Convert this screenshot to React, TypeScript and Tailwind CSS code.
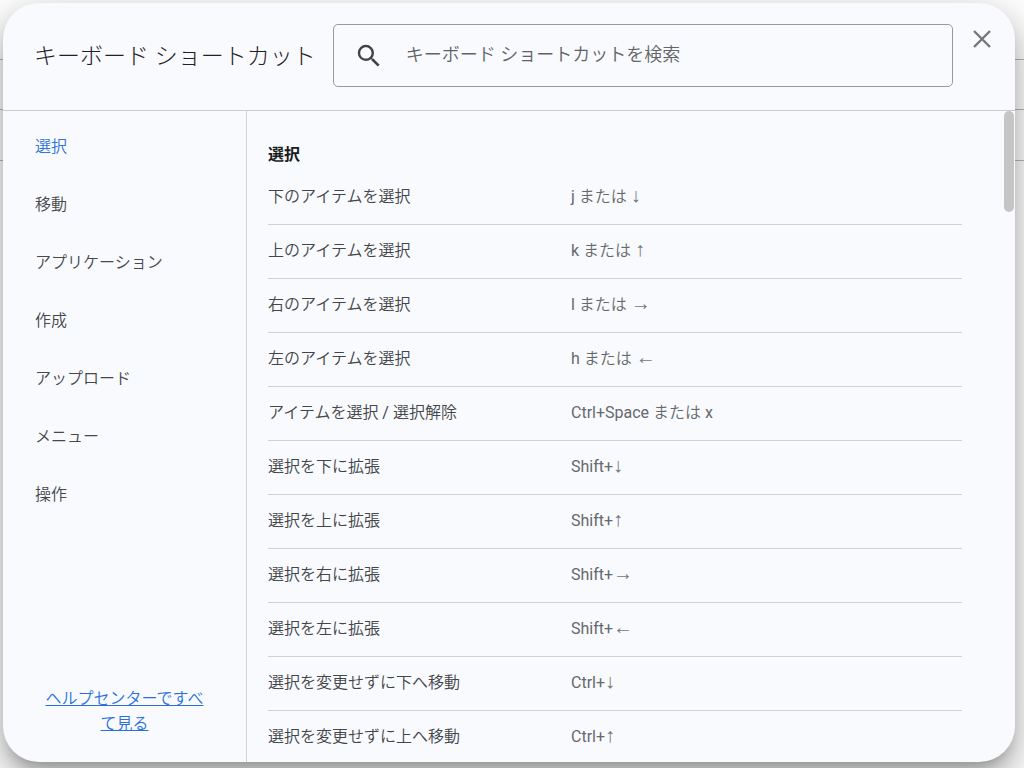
import React, { useState } from "react";

const sections = ["選択", "移動", "アプリケーション", "作成", "アップロード", "メニュー", "操作"];

const shortcuts: { action: string; keys: string; arrow?: string }[] = [
  { action: "下のアイテムを選択", keys: "j または ", arrow: "↓" },
  { action: "上のアイテムを選択", keys: "k または ", arrow: "↑" },
  { action: "右のアイテムを選択", keys: "l または ", arrow: "→" },
  { action: "左のアイテムを選択", keys: "h または ", arrow: "←" },
  { action: "アイテムを選択 / 選択解除", keys: "Ctrl+Space または x" },
  { action: "選択を下に拡張", keys: "Shift+", arrow: "↓" },
  { action: "選択を上に拡張", keys: "Shift+", arrow: "↑" },
  { action: "選択を右に拡張", keys: "Shift+", arrow: "→" },
  { action: "選択を左に拡張", keys: "Shift+", arrow: "←" },
  { action: "選択を変更せずに下へ移動", keys: "Ctrl+", arrow: "↓" },
  { action: "選択を変更せずに上へ移動", keys: "Ctrl+", arrow: "↑" },
];

function Header() {
  return (
    <header className="flex shrink-0 items-start border-b border-[#c9cbce] pt-[21px] pr-6 pb-[23px] pl-[31px]">
      <h1 className="flex h-[63px] shrink-0 items-center pt-1 pr-[17px] font-['Roboto','Noto_Sans_CJK_JP_Light','Noto_Sans_CJK_JP',sans-serif] text-[23px] text-[#1f2123]">
        キーボード ショートカット
      </h1>
      <div className="flex h-[63px] min-w-0 grow items-center rounded-[5px] border border-[#97999b] pl-5">
        <svg viewBox="0 0 24 24" className="size-[30px] shrink-0 fill-[#414345]" aria-hidden="true">
          <path d="M15.5 14h-.79l-.28-.27A6.471 6.471 0 0 0 16 9.5 6.5 6.5 0 1 0 9.5 16c1.61 0 3.09-.59 4.23-1.57l.27.28v.79l5 4.99L20.49 19l-4.99-5zm-6 0C7.01 14 5 11.99 5 9.5S7.01 5 9.5 5 14 7.01 14 9.5 11.99 14 9.5 14z" />
        </svg>
        <input
          type="text"
          aria-label="キーボード ショートカットを検索"
          placeholder="キーボード ショートカットを検索"
          className="ml-[22px] h-full min-w-0 grow bg-transparent pb-[2px] text-lg text-[#303134] outline-none placeholder:text-[#616366]"
        />
      </div>
      <button type="button" aria-label="閉じる" className="mt-[6px] ml-5 flex size-[18px] shrink-0 items-center justify-center">
        <svg viewBox="0 0 18 18" className="size-[18px] stroke-[#747679]" fill="none" strokeWidth="2.4" aria-hidden="true">
          <path d="M1 1l16 16M17 1L1 17" />
        </svg>
      </button>
    </header>
  );
}

function Sidebar({ active, onSelect }: { active: string; onSelect: (name: string) => void }) {
  return (
    <div className="flex w-[244px] shrink-0 flex-col border-r border-[#d0d2d5]">
      <nav className="flex flex-col pt-[7px]">
        {sections.map((name) => (
          <button
            key={name}
            type="button"
            onClick={() => onSelect(name)}
            className={
              name === active
                ? "h-[58px] pl-8 text-left text-[#2f73d9]"
                : "h-[58px] pl-8 text-left text-[#46484b]"
            }
          >
            {name}
          </button>
        ))}
      </nav>
      <div className="mt-auto px-9 pb-[26px] text-center leading-[25px]">
        <a href="#help" className="text-[#2a70dc] underline">
          ヘルプセンターですべて見る
        </a>
      </div>
    </div>
  );
}

function ShortcutList({ title }: { title: string }) {
  return (
    <div className="relative min-w-0 grow">
      <div className="h-full overflow-hidden pt-8 pr-[53px] pl-[21px]">
        <h2 className="h-[27px] font-['Roboto','Noto_Sans_CJK_JP',sans-serif] font-bold text-[#1b1c1e]">{title}</h2>
        <table className="w-full table-fixed border-collapse text-left">
          <tbody>
            {shortcuts.map((item) => (
              <tr key={item.action} className="h-[54px] border-b border-[#cfd1d4]">
                <th scope="row" className="w-[303px] p-0 font-normal text-[#434548]">
                  {item.action}
                </th>
                <td className="p-0 text-[#66686b]">
                  {item.keys}
                  {item.arrow && <span className="text-xl leading-none text-[#75777a]">{item.arrow}</span>}
                </td>
              </tr>
            ))}
          </tbody>
        </table>
      </div>
      <div className="absolute top-0 right-px h-[101px] w-[10px] rounded-full bg-[#c5c5c5]" />
    </div>
  );
}

export default function App() {
  const [active, setActive] = useState("選択");
  return (
    <div className="flex h-screen flex-col overflow-hidden bg-[linear-gradient(#b8b8b8,#b8b8b8),linear-gradient(#b8b8b8,#b8b8b8),linear-gradient(#b8b8b8,#b8b8b8)] bg-[size:100%_1px] bg-[position:0_59px,0_109px,0_160px] bg-no-repeat pt-[3px] pr-[9px] pb-[6px] pl-[3px] font-['Roboto','Liberation_Serif','Noto_Sans_CJK_JP_DemiLight','Noto_Sans_CJK_JP_Light','Noto_Sans_CJK_JP',sans-serif] text-base">
      <div
        role="dialog"
        aria-label="キーボード ショートカット"
        className="flex min-h-0 grow flex-col overflow-hidden rounded-[36px] bg-[#f8fafe] shadow-[0_11px_15px_-7px_rgba(0,0,0,0.26),0_20px_34px_3px_rgba(0,0,0,0.18),0_9px_40px_8px_rgba(0,0,0,0.12)]"
      >
        <Header />
        <div className="flex min-h-0 grow">
          <Sidebar active={active} onSelect={setActive} />
          <ShortcutList title={active} />
        </div>
      </div>
    </div>
  );
}
